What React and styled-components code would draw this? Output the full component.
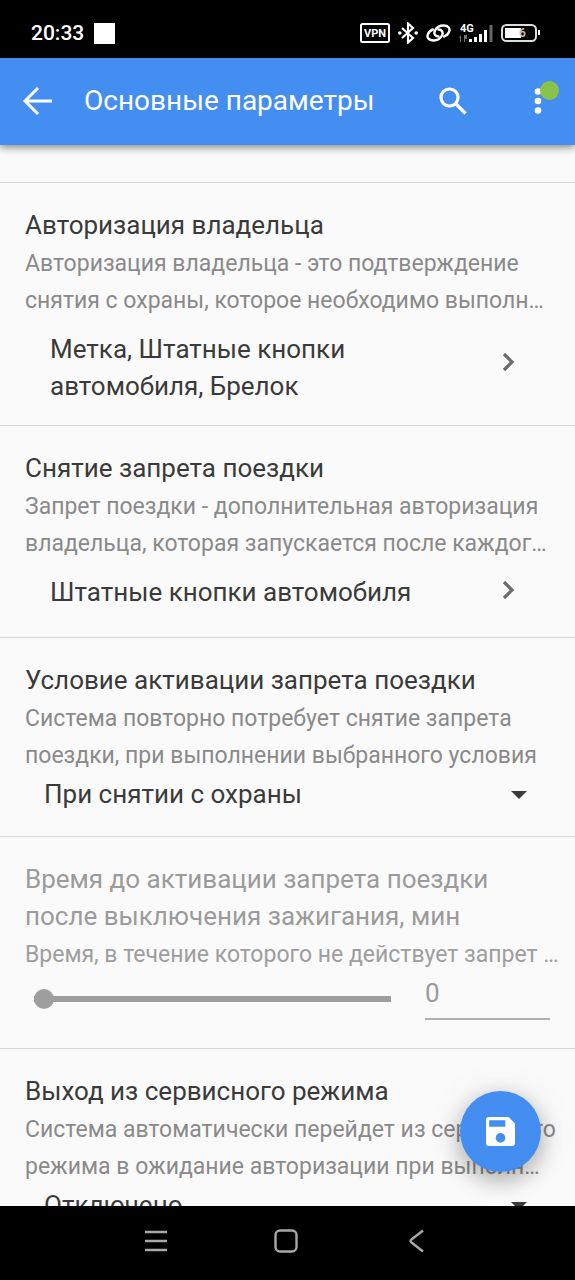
import React from "react";
import styled, { createGlobalStyle } from "styled-components";

const GlobalStyle = createGlobalStyle`
  *, *::before, *::after { box-sizing: border-box; }
  body { margin: 0; background: #fafafa; font-family: Roboto, "Noto Sans", sans-serif; }
  button, input, select { font: inherit; color: inherit; margin: 0; }
  h1, h2, p { margin: 0; font-weight: 400; }
`;

const Screen = styled.div`
  display: flex;
  flex-direction: column;
  height: 100vh;
  overflow: hidden;
`;

const StatusBar = styled.div`
  flex: none;
  display: flex;
  align-items: center;
  justify-content: space-between;
  height: 58px;
  padding: 8px 34px 0 31px;
  background: #000;
  color: #fff;
`;

const Clock = styled.div`
  display: flex;
  align-items: center;
  gap: 10px;
  font-size: 21px;
  font-weight: 500;
`;

const Square = styled.span`
  width: 21px;
  height: 21px;
  background: #fff;
`;

const StatusIcons = styled.div`
  display: flex;
  align-items: center;
  gap: 8px;
`;

const AppBar = styled.header`
  flex: none;
  position: relative;
  z-index: 1;
  display: flex;
  align-items: center;
  height: 87px;
  padding: 0 19px 2px 20px;
  background: #448ef1;
  color: #fff;
  box-shadow: 0 2px 8px rgba(0, 0, 0, 0.5);
`;

const Title = styled.h1`
  flex: 1;
  padding-left: 30px;
  font-size: 28px;
  line-height: 36px;
  white-space: nowrap;
`;

const IconButton = styled.button`
  position: relative;
  display: flex;
  align-items: center;
  justify-content: center;
  width: ${(p) => p.$width}px;
  height: 48px;
  margin-left: ${(p) => p.$gap || 0}px;
  padding: 0;
  border: 0;
  background: none;
`;

const Badge = styled.span`
  position: absolute;
  top: 4px;
  right: -3px;
  width: 19px;
  height: 19px;
  border-radius: 50%;
  background: #8bc34a;
`;

const Content = styled.main`
  flex: 1;
  min-height: 0;
  overflow: hidden;
  padding-top: 37px;
  background: #fafafa;
`;

const Section = styled.section`
  padding: 24px 25px 20px;
  border-top: 1px solid #d4d4d4;
  color: ${(p) => (p.$disabled ? "#9b9b9b" : "#3a3a3a")};
`;

const Heading = styled.h2`
  font-size: 26px;
  line-height: 37px;
`;

const Description = styled.p`
  margin-top: 1px;
  font-size: 23px;
  line-height: 37px;
  color: ${(p) => (p.$disabled ? "#9e9e9e" : "#8a8a8a")};
`;

const Line = styled.span`
  display: block;
  white-space: nowrap;
`;

const LinkRow = styled.button`
  display: flex;
  align-items: center;
  justify-content: space-between;
  width: 100%;
  min-height: 55px;
  padding: 0 35px 0 25px;
  border: 0;
  background: none;
  text-align: left;
`;

const LinkValue = styled.span`
  align-self: flex-start;
  padding-top: 12px;
  font-size: 26px;
  line-height: 37px;
`;

const SelectRow = styled.div`
  display: flex;
  align-items: center;
  padding: 2px 23px 3px 19px;
`;

const Select = styled.select`
  flex: 1;
  min-width: 0;
  height: 37px;
  padding: 0;
  border: 0;
  background: none;
  appearance: none;
  font-size: 26px;
  line-height: 37px;
`;

const SliderRow = styled.div`
  display: flex;
  align-items: flex-start;
  gap: 34px;
  height: 55px;
  padding: 1px 0 0 9px;
`;

const Slider = styled.input`
  flex: 1;
  min-width: 0;
  height: 50px;
  appearance: none;
  background: none;
  opacity: 1;
  &::-webkit-slider-runnable-track {
    height: 6px;
    background: #9e9e9e;
  }
  &::-webkit-slider-thumb {
    appearance: none;
    width: 20px;
    height: 20px;
    margin-top: -7px;
    border-radius: 50%;
    background: #9e9e9e;
  }
`;

const NumberField = styled.input`
  width: 125px;
  height: 46px;
  padding: 0 0 6px;
  border: 0;
  border-bottom: 2px solid #b0b0b0;
  border-radius: 0;
  background: none;
  font-size: 26px;
`;

const SaveButton = styled.button`
  position: fixed;
  right: 34px;
  bottom: 108px;
  z-index: 1;
  display: flex;
  align-items: center;
  justify-content: center;
  width: 81px;
  height: 81px;
  padding: 0;
  border: 0;
  border-radius: 50%;
  background: #448ef1;
  box-shadow: 0 8px 24px rgba(0, 0, 0, 0.3), 0 2px 40px rgba(0, 0, 0, 0.08);
`;

const NavBar = styled.nav`
  flex: none;
  position: relative;
  z-index: 2;
  display: flex;
  justify-content: center;
  align-items: center;
  gap: 82px;
  height: 74px;
  padding: 0 4px 4px 0;
  background: #000;
`;

const Chevron = () => (
  <svg width="14" height="20" viewBox="0 0 14 20" fill="none" stroke="#6b6b6b" strokeWidth="3.200">
    <path d="M3 2l8 8-8 8" />
  </svg>
);

const Caret = () => (
  <svg width="16" height="8" viewBox="0 0 16 8">
    <path d="M0 0h16L8 8z" fill="#3a3a3a" />
  </svg>
);

const Setting = ({ title, lines, disabled, children }) => (
  <Section $disabled={disabled}>
    <Heading>{title.map((t) => <Line key={t}>{t}</Line>)}</Heading>
    <Description $disabled={disabled}>{lines.map((t) => <Line key={t}>{t}</Line>)}</Description>
    {children}
  </Section>
);

const Dropdown = ({ label, value }) => (
  <SelectRow>
    <Select aria-label={label} defaultValue={value}>
      <option>{value}</option>
    </Select>
    <Caret />
  </SelectRow>
);

export default function App() {
  return (
    <Screen>
      <GlobalStyle />
      <StatusBar>
        <Clock>20:33<Square /></Clock>
        <StatusIcons>
          <svg width="30" height="20" viewBox="0 0 30 20">
            <rect x="1" y="1" width="28" height="18" rx="1.500" fill="none" stroke="#fff" strokeWidth="2" />
            <text x="15" y="14" fontSize="11" fontWeight="700" textAnchor="middle" fill="#fff">VPN</text>
          </svg>
          <svg width="20" height="22" viewBox="0 0 20 22" fill="none" stroke="#fff" strokeWidth="2.200">
            <path d="M4 6l11 10-5 4.500V1.500L15 6 4 16" />
            <circle cx="1.800" cy="11" r="1.800" fill="#fff" stroke="none" />
            <circle cx="18.200" cy="11" r="1.800" fill="#fff" stroke="none" />
          </svg>
          <svg width="25" height="20" viewBox="0 0 25 20" fill="none" stroke="#fff" strokeWidth="2.400" strokeLinecap="round">
            <path d="M12.500 13.500C9 13.500 7.500 10.500 9 7.500 10.500 4.500 13.500 2.500 17.500 2.500c5 0 7 3 5.500 6.500-.9 2.200-2.800 3.800-5 4.500" />
            <path d="M12.500 6.500c3.500 0 5 3 3.500 6-1.500 3-4.500 5-8.500 5-5 0-7-3-5.500-6.500.9-2.200 2.800-3.800 5-4.500" />
          </svg>
          <svg width="34" height="20" viewBox="0 0 34 20" fill="#fff">
            <text x="1" y="9" fontSize="11" fontWeight="700">4G</text>
            <path d="M10 16h3v3h-3zM15 14h3v5h-3zM20 11h3v8h-3zM25 7h3v12h-3z" />
            <path d="M30.500 2h3v17h-3z" fill="#666" />
            <path d="M2 12v7H1v-4H0zM5 12h3v4H6v3H5z" fill="#777" />
          </svg>
          <svg width="40" height="20" viewBox="0 0 40 20">
            <rect x="1" y="2" width="34" height="16" rx="4.500" fill="none" stroke="#ddd" strokeWidth="2" />
            <path d="M4 5h16v10H4z" fill="#fff" />
            <text x="18" y="14" fontSize="12" fontWeight="700" fill="#bbb">6</text>
            <path d="M37 7h2v5h-2z" fill="#fff" />
          </svg>
        </StatusIcons>
      </StatusBar>
      <AppBar>
        <IconButton $width={34} aria-label="Назад">
          <svg width="30" height="30" viewBox="0 0 30 30" fill="none" stroke="#fff" strokeWidth="3">
            <path d="M30 15H3M16 2L3 15l13 13" />
          </svg>
        </IconButton>
        <Title>Основные параметры</Title>
        <IconButton $width={40} aria-label="Поиск">
          <svg width="28" height="28" viewBox="0 0 28 28" fill="none" stroke="#fff" strokeWidth="3.200">
            <circle cx="10.500" cy="10.500" r="8.500" />
            <path d="M16.500 16.500L26.500 26.500" />
          </svg>
        </IconButton>
        <IconButton $width={37} $gap={46} aria-label="Меню">
          <svg width="8" height="28" viewBox="0 0 8 28" fill="#fff">
            <circle cx="4" cy="4.500" r="3.300" />
            <circle cx="4" cy="14" r="3.300" />
            <circle cx="4" cy="23.500" r="3.300" />
          </svg>
          <Badge />
        </IconButton>
      </AppBar>
      <Content>
        <Setting
          title={["Авторизация владельца"]}
          lines={["Авторизация владельца - это подтверждение", "снятия с охраны, которое необходимо выполн…"]}
        >
          <LinkRow>
            <LinkValue>
              <Line>Метка, Штатные кнопки</Line>
              <Line>автомобиля, Брелок</Line>
            </LinkValue>
            <Chevron />
          </LinkRow>
        </Setting>
        <Setting
          title={["Снятие запрета поездки"]}
          lines={["Запрет поездки - дополнительная авторизация", "владельца, которая запускается после каждог…"]}
        >
          <LinkRow>
            <LinkValue>Штатные кнопки автомобиля</LinkValue>
            <Chevron />
          </LinkRow>
        </Setting>
        <Setting
          title={["Условие активации запрета поездки"]}
          lines={["Система повторно потребует снятие запрета", "поездки, при выполнении выбранного условия"]}
        >
          <Dropdown label="Условие активации запрета поездки" value="При снятии с охраны" />
        </Setting>
        <Setting
          disabled
          title={["Время до активации запрета поездки", "после выключения зажигания, мин"]}
          lines={["Время, в течение которого не действует запрет …"]}
        >
          <SliderRow>
            <Slider type="range" min="0" max="60" defaultValue="0" disabled aria-label="Время до активации, мин" />
            <NumberField type="text" defaultValue="0" disabled aria-label="Значение, мин" />
          </SliderRow>
        </Setting>
        <Setting
          title={["Выход из сервисного режима"]}
          lines={["Система автоматически перейдет из сервисного", "режима в ожидание авторизации при выполн…"]}
        >
          <Dropdown label="Выход из сервисного режима" value="Отключено" />
        </Setting>
      </Content>
      <SaveButton aria-label="Сохранить">
        <svg width="29" height="29" viewBox="3 3 18 18" fill="#fff">
          <path d="M17 3H5a2 2 0 0 0-2 2v14a2 2 0 0 0 2 2h14a2 2 0 0 0 2-2V7l-4-4zm-5 16a3 3 0 1 1 0-6 3 3 0 0 1 0 6zm3-10H5V5h10v4z" />
        </svg>
      </SaveButton>
      <NavBar>
        <IconButton $width={48} aria-label="Недавние">
          <svg width="22" height="24" viewBox="0 0 22 24" stroke="#a8a8a8" strokeWidth="2.400">
            <path d="M0 3h22M0 12h22M0 21h22" />
          </svg>
        </IconButton>
        <IconButton $width={48} aria-label="Домой">
          <svg width="24" height="24" viewBox="0 0 24 24" fill="none" stroke="#a8a8a8" strokeWidth="2.400">
            <rect x="1.500" y="1.500" width="21" height="21" rx="4.500" />
          </svg>
        </IconButton>
        <IconButton $width={48} aria-label="Назад (система)">
          <svg width="16" height="24" viewBox="0 0 16 24" fill="none" stroke="#a8a8a8" strokeWidth="2.400">
            <path d="M15 1.500L3.500 10.500q-2 1.500 0 3L15 22.500" />
          </svg>
        </IconButton>
      </NavBar>
    </Screen>
  );
}
